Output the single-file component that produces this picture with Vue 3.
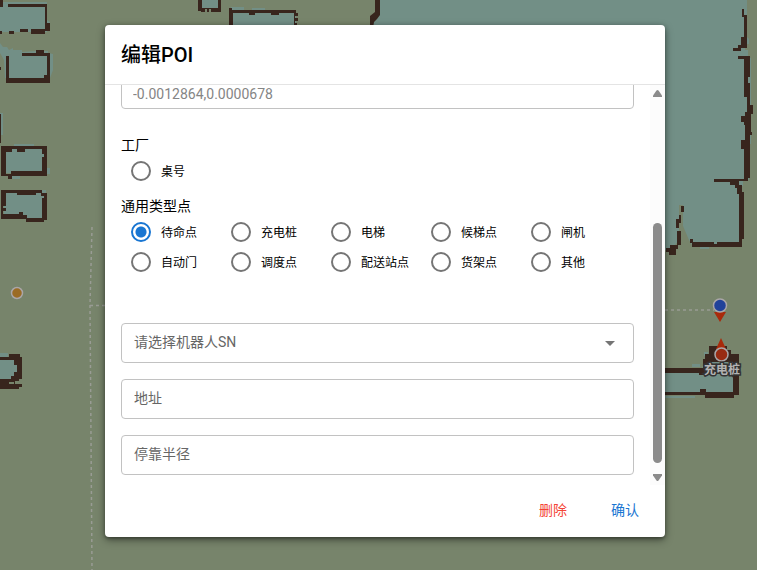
<script setup>
import { ref } from 'vue'

const groups = [
  { title: '工厂', items: ['桌号'] },
  {
    title: '通用类型点',
    items: ['待命点', '充电桩', '电梯', '候梯点', '闸机', '自动门', '调度点', '配送站点', '货架点', '其他'],
  },
]
const type = ref('待命点')
const position = ref('-0.0012864,0.0000678')
const robot = ref('')
const address = ref('')
const radius = ref('')
</script>

<template>
  <main class="page">
    <svg class="map" viewBox="0 0 757 570" preserveAspectRatio="xMidYMid slice" aria-hidden="true">
      <g class="free">
        <path d="M0 2H47V20L50 22V26H47V32H0Z" />
        <path d="M0 43L3 47H7L9 50L13 48V50H22V52L36 51H48V53L53 54V70L50 78H5L4 60L0 53Z" />
        <path d="M0 113H3V135H0ZM14 144H34V147H14ZM47 168H50V174H47ZM12 176H20V179H12Z" />
        <path d="M4 149H44V173H4ZM4 192H42V190H46V218H4Z" />
        <path d="M0 353H8V357H17V380H0Z" />
        <path d="M201 0H219V9H201ZM231 7H244V10H231ZM252 8H265V11H252ZM231 11H296V28H231Z" />
        <path d="M378 0H747V37L749 39V44H745V50H748V58H751V144H749V180H743V186H741V245H692L689 240L683 226V205H679V240L671 250H655L371 100V22L378 13Z" />
        <path d="M700 247H709V249H700Z" />
        <path d="M655 372H702V366H706V355H736V394H655ZM692 364H700V367H692ZM663 396H695V398H663ZM704 352H708V356H704Z" />
      </g>
      <g class="wall">
        <path d="M0 0H3V7H0ZM8 4H47V23H50V31H45V34H31V29H45V7H8ZM20 29H28V32H20ZM9 31H14V34H9ZM0 31H2V34H0ZM0 67H1V70H0Z" />
        <path fill-rule="evenodd" d="M6 56H9V78H44V75H47V56H22V53H36V50H44V53H50V83H6Z" />
        <path d="M0 114H1V143H0Z" />
        <path fill-rule="evenodd" d="M1 146H47V176H12V179H8V176H1ZM6 152V174H11V171H42V157H44V154H42V149H25V152H17V149H12V152Z" />
        <path fill-rule="evenodd" d="M1 190H42V193H47V220H44V222H26V219H1ZM6 193V206H3V208H6V211H3V214H19V212H23V215H27V218H42V198H44V196H41V193H36V195H33V193H33V195H17V193Z" />
        <path fill-rule="evenodd" d="M0 357H9V354H20V357H22V379H19V381H15V384H22V387H19V389H0V379H11V376H14V372H17V365H14V360H0ZM9 382V384H14V382Z" />
        <path d="M198 0H202V8H218V0H221V12H211V9H209V12H207V9H205V12H201V11H198ZM229 8H232V10H296V13H298V16H295V18H298V21H295V23H297V25H294V13H279V15H271V13H255V15H249V13H233V28H229Z" />
        <path d="M375 0H380V15L377 19L374 22L373 28H370V16L375 12Z" />
        <path d="M742 9H744V15H747V48H741V51H733V48H738V45H741V37H744V17H742ZM738 56H750V77H748V83H750V105H753V114H751V132H752V135H750V178H748V181H739V185H742V192H744V239H742V247H692V243H690V239H693V242H714V244H717V242H739V194H737V188H735V185H730V182H714V179H744V149H741V140H745V125H744V122H741V116H745V112H747V97H744V59H738Z" />
        <path d="M681 206H684V212H681ZM679 215H681V223H679V228H676V219H679ZM677 231H681V245H678V249H676V255H669V252H666V248H670V245H677Z" />
        <path fill-rule="evenodd" d="M655 368H703V359H705V354H709V346H727V350H731V354H739V395H734V398H705V395H655V392H700V389H706V392H733V362H708V369H705V375H699V373H655Z" />
      </g>
      <g class="routes">
        <path d="M92 227L90 305L92 570" />
        <path d="M90 305.500H105M665 310H714" />
      </g>
      <g class="pins">
        <circle class="amber" cx="17" cy="293" r="5.5" />
        <path d="M714 312H726L720 322Z" />
        <circle class="blue" cx="720" cy="305.500" r="6.500" />
        <path d="M716 349H726L721 338Z" />
        <circle class="red" cx="721.500" cy="354.500" r="6.500" />
        <text x="722" y="374">充电桩</text>
      </g>
    </svg>

    <form class="dialog" role="dialog" aria-labelledby="dialog-title" @submit.prevent>
      <header class="header"><h1 id="dialog-title">编辑POI</h1></header>
      <div class="body">
        <div class="content">
          <input v-model="position" class="field position" aria-label="坐标" readonly />
          <div class="groups">
            <fieldset v-for="group in groups" :key="group.title" class="group">
              <legend>{{ group.title }}</legend>
              <div class="options">
                <label v-for="item in group.items" :key="item" class="option">
                  <input v-model="type" type="radio" name="type" :value="item" />
                  <span>{{ item }}</span>
                </label>
              </div>
            </fieldset>
          </div>
          <div class="fields">
            <div class="select">
              <select v-model="robot" class="field" aria-label="请选择机器人SN">
                <option value="">请选择机器人SN</option>
              </select>
              <svg class="caret" viewBox="0 0 10 5" aria-hidden="true"><path d="M0 0H10L5 5Z" /></svg>
            </div>
            <input v-model="address" class="field" placeholder="地址" aria-label="地址" />
            <input v-model="radius" class="field" placeholder="停靠半径" aria-label="停靠半径" />
          </div>
        </div>
        <div class="scrollbar" aria-hidden="true">
          <svg class="arrow" viewBox="0 0 9 7"><path d="M3.500 0.500Q4.500 -0.500 5.500 0.500L9 5.500V7H0V5.500Z" /></svg>
          <div class="track"><div class="thumb"></div></div>
          <svg class="arrow" viewBox="0 0 9 7"><path d="M3.500 6.500Q4.500 7.500 5.500 6.500L9 1.500V0H0V1.500Z" /></svg>
        </div>
      </div>
      <footer class="footer">
        <button type="button" class="delete">删除</button>
        <button type="submit" class="confirm">确认</button>
      </footer>
    </form>
  </main>
</template>

<style>
body {
  margin: 0;
}
</style>

<style scoped>
.page {
  position: relative;
  box-sizing: border-box;
  min-height: 100vh;
  padding: 25px 16px 32px 29px;
  overflow: hidden;
  background: #77846b;
  font-family: Roboto, "Noto Sans CJK SC", sans-serif;
  font-size: 14px;
  color: #000;
}
.map {
  position: absolute;
  inset: 0;
  width: 100%;
  height: 100%;
}
.free {
  fill: #728f86;
}
.wall {
  fill: #38251d;
}
.routes {
  fill: none;
  stroke: #999c94;
  stroke-width: 1.5;
  stroke-dasharray: 3 3;
}
.pins path {
  fill: #a82a0b;
}
.pins circle {
  stroke: #aaa6a8;
  stroke-width: 1.5;
}
.pins .amber {
  fill: #9b6b24;
}
.pins .blue {
  fill: #21429a;
}
.pins .red {
  fill: #982b12;
}
.pins text {
  fill: #b3b3b3;
  stroke: #333;
  stroke-width: 3;
  paint-order: stroke;
  font-size: 12px;
  font-weight: 700;
  text-anchor: middle;
}
.dialog {
  position: relative;
  box-sizing: border-box;
  max-width: 560px;
  margin: 0 auto;
  overflow: hidden;
  border-radius: 4px;
  background: #fff;
  box-shadow: 0 1px 5px rgba(0, 0, 0, 0.2), 0 2px 2px rgba(0, 0, 0, 0.14), 0 3px 8px rgba(0, 0, 0, 0.4);
}
.header {
  padding: 14px 16px 13px;
  border-bottom: 1px solid #e4e4e4;
}
h1 {
  margin: 0;
  font-size: 20px;
  line-height: 32px;
  font-weight: 500;
}
.body {
  display: flex;
  height: 400px;
  overflow: hidden;
}
.content {
  display: flex;
  flex: 1;
  flex-direction: column;
  justify-content: flex-end;
  min-width: 0;
  padding: 0 16px 10px;
}
.field {
  display: block;
  box-sizing: border-box;
  flex: none;
  width: 100%;
  height: 40px;
  margin: 0;
  padding: 0 12px 2px;
  border: 1px solid #c2c2c2;
  border-radius: 4px;
  outline: 0;
  appearance: none;
  background: #fff;
  font: inherit;
  color: #666;
}
.field::placeholder {
  color: #666;
  opacity: 1;
}
.position {
  padding: 10px 11px 0;
  color: #858585;
}
.groups {
  display: grid;
  gap: 10px;
  padding: 26px 0 46px;
}
.group {
  min-width: 0;
  margin: 0;
  padding: 0;
  border: 0;
}
legend {
  padding: 0;
  line-height: 21px;
}
.options {
  display: grid;
  grid-template-columns: repeat(5, 100px);
}
.option {
  display: flex;
  align-items: center;
  gap: 10px;
  height: 30px;
  padding-left: 10px;
  font-size: 12px;
  white-space: nowrap;
}
.option span {
  padding-bottom: 2px;
}
.option input {
  flex: none;
  width: 20px;
  height: 20px;
  margin: 0;
  border: 2px solid #757575;
  border-radius: 50%;
  appearance: none;
}
.option input:checked {
  border-color: #1976d2;
  background: radial-gradient(circle, #1976d2 5px, #fff 6px);
}
.fields {
  display: grid;
  gap: 16px;
}
.select {
  position: relative;
}
.caret {
  position: absolute;
  top: 18px;
  right: 19px;
  width: 10px;
  height: 5px;
  fill: #757575;
}
.scrollbar {
  display: flex;
  flex: none;
  flex-direction: column;
  align-items: center;
  box-sizing: border-box;
  width: 15px;
  padding: 5px 0 4px;
  background: #fcfcfc;
}
.arrow {
  width: 9px;
  height: 7px;
  fill: #8b8b8b;
}
.track {
  display: flex;
  flex: 1;
  align-items: flex-end;
  padding-bottom: 11px;
}
.thumb {
  width: 9px;
  height: 240px;
  border-radius: 5px;
  background: #8b8b8b;
}
.footer {
  display: flex;
  justify-content: flex-end;
  gap: 12px;
  padding: 8px 10px;
}
button {
  height: 36px;
  padding: 0 16px 4px;
  border: 0;
  border-radius: 4px;
  background: none;
  font: inherit;
  cursor: pointer;
}
.delete {
  color: #f44336;
}
.confirm {
  color: #1976d2;
}
</style>
